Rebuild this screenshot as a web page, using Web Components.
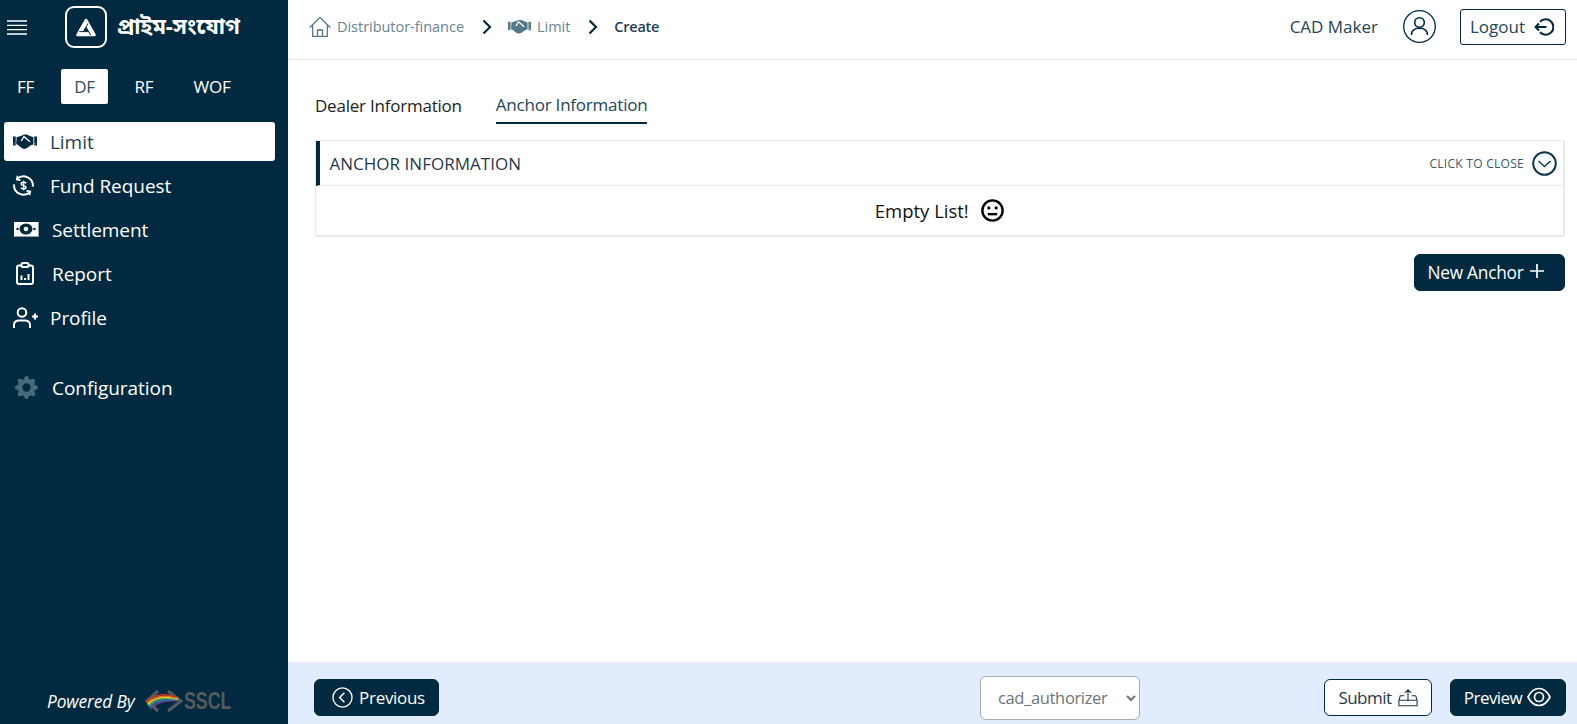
<!DOCTYPE html>
<html><head><meta charset="utf-8"><title>Limit</title>
<style>
html,body{margin:0;height:100%;overflow:hidden}
body{font-family:"Open Sans","Noto Sans",sans-serif;color:#012a40;background:#fff}
</style></head><body>
<app-shell></app-shell>
<script>
const handshake=(c,hs,w=24,h=15,slot='')=>`<svg ${slot} viewBox="0 0 24 15" width="${w}" height="${h}" style="display:block"><path fill="${c}" d="M0 2.500h2.700v9H0zM21.300 2.500H24v9h-2.700zM3.600 3.200 8.500 1.800 10.900.6h3l3 1.400 3.500 1.200v7.400l-2 .5-4.500 3-2 .8-2.500-.4-4.500-3.400-1.700-1z"/><path fill="none" stroke="${hs}" stroke-width="1.400" d="M8.300 7 11 2.500l5.900 5.300"/><path fill="${hs}" d="M1 9.500h.7v.8H1zM22.300 9.500h.7v.8h-.7z"/></svg>`;
const icons={
 fund:`<svg slot="icon" style="display:block" viewBox="0 0 22 22" width="21" height="21" fill="none" stroke="#fff" stroke-width="2"><path d="M4.400 4A9.800 9.800 0 0 1 20.800 12.200M17.600 18A9.800 9.800 0 0 1 1.200 9.800"/><path d="M4.800 .8 3.900 4.700l3.900.7M17.200 21.200l.9-3.900-3.900-.7" stroke-width="1.800"/><path d="M13.800 8.600c-.5-.7-1.500-1.100-2.700-1.100-1.600 0-2.600.7-2.600 1.800 0 2.500 5.200 1.100 5.200 3.500 0 1.100-1.100 1.800-2.600 1.800-1.200 0-2.300-.4-2.900-1.200M11.100 6v10" stroke-width="1.500"/></svg>`,
 cash:`<svg slot="icon" style="display:block" viewBox="0 0 25 15" width="25" height="15"><rect width="25" height="15" fill="#8fa0ab"/><rect width="24" height="14" fill="#fff"/><ellipse cx="12" cy="7" rx="6.500" ry="5.500" fill="#012a40"/><circle cx="12" cy="7" r="2.300" fill="#fff"/><circle cx="3.500" cy="7" r="1.200" fill="#012a40"/><circle cx="20.500" cy="7" r="1.200" fill="#012a40"/></svg>`,
 report:`<svg slot="icon" style="display:block" viewBox="0 0 18 23" width="18" height="23" fill="none" stroke="#fff" stroke-width="2"><rect x="1" y="3.500" width="16" height="18.500" rx="2"/><rect x="5.500" y="1" width="7" height="4" rx="1.500" fill="#012a40"/><path d="M5.500 18v-4.500M9 18v-2M12.500 18v-6"/></svg>`,
 profile:`<svg slot="icon" style="display:block" viewBox="0 0 25 21" width="25" height="21" fill="none" stroke="#fff" stroke-width="2"><circle cx="9" cy="5.500" r="4.300"/><path d="M1 21v-3c0-3 2.400-4.500 5-4.500h6c2.600 0 5 1.500 5 4.500v3"/><path d="M19 9.500h6M22 6.500v6" stroke-width="2.200"/></svg>`,
 gear:`<svg slot="icon" style="display:block" viewBox="0 0 16 16" width="23" height="23"><path fill="#47697c" d="M9.405 1.050c-.413-1.400-2.397-1.400-2.810 0l-.1.340a1.464 1.464 0 0 1-2.105.872l-.31-.17c-1.283-.698-2.686.705-1.987 1.987l.169.311c.446.820.023 1.841-.872 2.105l-.34.100c-1.400.413-1.400 2.397 0 2.810l.34.100a1.464 1.464 0 0 1 .872 2.105l-.17.310c-.698 1.283.705 2.686 1.987 1.987l.311-.169a1.464 1.464 0 0 1 2.105.872l.1.340c.413 1.400 2.397 1.400 2.810 0l.1-.340a1.464 1.464 0 0 1 2.105-.872l.31.170c1.283.698 2.686-.705 1.987-1.987l-.169-.311a1.464 1.464 0 0 1 .872-2.105l.34-.100c1.400-.413 1.400-2.397 0-2.810l-.34-.100a1.464 1.464 0 0 1-.872-2.105l.17-.310c.698-1.283-.705-2.686-1.987-1.987l-.311.169a1.464 1.464 0 0 1-2.105-.872l-.1-.340zM8 10.930a2.929 2.929 0 1 1 0-5.860 2.929 2.929 0 0 1 0 5.858z"/></svg>`
};
function el(name,html){customElements.define(name,class extends HTMLElement{constructor(){super();this.attachShadow({mode:'open'}).innerHTML=html}})}

el('nav-item',`<style>:host{display:flex;align-items:center;height:39px;margin:0 13px 5px 4px;color:#fff;font-size:19px;letter-spacing:-.05px;border-radius:3px}
:host([active]){background:#fff;color:#1e3f52}
.i{display:flex;align-items:center;width:var(--iw,46px);padding-left:var(--ip,9px);box-sizing:border-box}
</style><span class="i"><slot name="icon"></slot></span><slot></slot>`);

el('program-tabs',`<style>:host{display:flex;align-items:center;height:35px;margin:9px 0 18px 0;color:#fff;font-size:17px;letter-spacing:-.2px}
span{display:flex;align-items:center;justify-content:center;height:35px;border-radius:2px}
.a{background:#fff;color:#33515f}</style>
<span style="width:17px;margin-left:17px">FF</span><span class="a" style="width:47px;margin-left:27px">DF</span><span style="width:20px;margin-left:26px">RF</span><span style="width:40px;margin-left:38px">WOF</span>`);

el('side-nav',`<style>:host{display:flex;flex-direction:column;width:288px;flex:none;background:#012a40;color:#fff;height:100%;box-sizing:border-box}
.brand{display:flex;align-items:center;height:60px;box-sizing:border-box;padding-bottom:6px;box-shadow:0 1px 0 rgba(0,0,0,.12)}
.ham{width:20px;height:15px;margin-left:7px;display:block}
.logo{width:42px;height:42px;box-sizing:border-box;border:2px solid #fff;border-radius:9px;margin-left:38px;display:flex;align-items:center;justify-content:center}
.name{margin-left:10px;padding-top:3px;font:700 22px "Noto Sans Bengali","Noto Sans","Open Sans",sans-serif;white-space:nowrap;letter-spacing:-.2px}
.items{display:flex;flex-direction:column}
.foot{margin-top:auto;height:44px;display:flex;align-items:center;padding-left:47px;font-style:italic;font-size:17.300px;letter-spacing:-.1px;padding-bottom:2px;box-sizing:border-box}
.foot svg{margin-left:10px;display:block;flex:none}
.sscl{font:700 24px "Liberation Sans";font-style:normal;color:#555a5e;letter-spacing:0;margin-left:1px;transform:scaleX(.74);transform-origin:left center;display:inline-block;width:47px}
</style>
<div class="brand">
<svg class="ham" viewBox="0 0 20 15" stroke="#fff" stroke-width="1.300"><path d="M0 1h20M0 5.300h20M0 9.700h20M0 14h20"/></svg>
<div class="logo"><svg viewBox="0 0 20 19" width="20" height="19"><path fill="#fff" stroke="#fff" stroke-width="2.600" stroke-linejoin="round" d="M10 2 18.500 17H1.500z"/><path fill="#012a40" d="M10 9 12.600 13.600H7.400z"/><path fill="none" stroke="#012a40" stroke-width="1" d="M7.400 13.600 12 5.400M10 9l4.900 8.400M12.600 13.600H3.200"/></svg></div>
<div class="name">প্রাইম-সংযোগ</div></div>
<program-tabs></program-tabs>
<div class="items"><slot></slot></div>
<div class="foot"><span>Powered By</span>
<svg viewBox="0 0 38 24" width="38" height="24" fill="none"><path stroke="#555a5e" stroke-width="3.200" d="M13 2 2 12l11 10M23 2l13 10-13 10"/><path stroke="#7a3f8f" stroke-width="1.400" d="M5 20C11 13 20 11 33 11.500"/><path stroke="#2a6fb8" stroke-width="1.400" d="M4 18.500C10 12 20 9.500 33 11"/><path stroke="#3aa655" stroke-width="1.400" d="M3.300 17C10 10 20 8 33 10.500"/><path stroke="#f6d52b" stroke-width="1.400" d="M2.600 15.500C9 9 20 6.500 33 10"/><path stroke="#f2801b" stroke-width="1.400" d="M2 14C9 7.500 19 5 32 9.500"/><path stroke="#d0312d" stroke-width="1.400" d="M1.500 12.500C8 6 19 3.500 30 8"/></svg>
<span class="sscl">SSCL</span></div>`);

const chev=`<svg class="c" viewBox="0 0 10 16" width="10" height="16" fill="none" stroke="#012a40" stroke-width="2.200"><path d="M1.500 1.500 8 8l-6.500 6.500"/></svg>`;
el('bread-crumb',`<style>:host{display:flex;align-items:center;margin-left:21px;font-size:14.500px;color:#6a8494;letter-spacing:-.03px;white-space:nowrap}
.c{margin:0 16px 0 18px;display:block}
.b{color:#1e3f52;font-weight:600;font-size:14.500px;letter-spacing:-.25px}
svg{display:block}</style>
<svg viewBox="0 0 22 22" width="22" height="22" fill="none" stroke="#55778a" stroke-width="1.300" style="margin-right:6px"><path d="M.8 11.500 11 1.300l10.200 10.200M3.700 9v11.300h14.600V9M8.500 20.300v-6.300h5v6.300"/></svg>
<span>Distributor-finance</span>${chev}
<span style="margin-right:6px">${handshake('#55778a','#fff',23,15)}</span><span>Limit</span>${chev}
<span class="b">Create</span>`);

el('top-bar',`<style>:host{display:flex;align-items:center;height:60px;flex:none;box-sizing:border-box;padding-bottom:6px;border-bottom:1px solid #ececec;box-shadow:inset 8px 0 8px -8px rgba(0,0,0,.05)}
.r{margin-left:auto;display:flex;align-items:center;font-size:17px;color:#23465a;padding-right:11px}
.u{margin:0 24px 0 25px;display:block}
.l{display:flex;align-items:center;height:36px;width:106px;box-sizing:border-box;border:1px solid #012a40;border-radius:3px;padding-left:9px;gap:9px}</style>
<bread-crumb></bread-crumb>
<div class="r"><span>CAD Maker</span>
<svg class="u" viewBox="0 0 33 33" width="33" height="33" fill="none" stroke="#012a40" stroke-width="1.300"><circle cx="16.500" cy="16.500" r="15.800"/><circle cx="16.500" cy="12.500" r="4.800" stroke-width="1.600"/><path d="M8.500 25c0-5 3.500-6.700 8-6.700s8 1.700 8 6.700" stroke-width="1.600"/></svg>
<div class="l"><span>Logout</span><svg viewBox="0 0 20 20" width="20" height="20" fill="none" stroke="#012a40" stroke-width="2"><path d="M6 4.800A7.700 7.700 0 1 1 6 15.200M1.500 10h11M5 6.500 1.500 10 5 13.500"/></svg></div></div>`);

el('tab-bar',`<style>:host{display:flex;gap:34px;height:64px;align-items:flex-end;margin-left:27px;font-size:17px;letter-spacing:-.22px;box-sizing:border-box}
span{display:block;height:30px;box-sizing:border-box;line-height:24px;white-space:nowrap}
.a{color:#23465a;border-bottom:2px solid #012a40;line-height:22px}
.d{color:#222}</style><span class="d">Dealer Information</span><span class="a">Anchor Information</span>`);

el('info-accordion',`<style>:host{display:block;margin:16px 12px 0 26.500px;border:1px solid #e8e8ee;border-bottom-width:2px;border-right-width:2px;border-radius:2px;height:97px;box-sizing:border-box}
.h{display:flex;align-items:center;height:45px;box-sizing:border-box;border-left:4px solid #012a40;border-bottom:1px solid #e8e8ee;padding:0 6px 0 10px;font-size:17px;letter-spacing:.02px;color:#1f3a4a}
.t{margin-left:auto;font-size:12px;color:#3c5868;letter-spacing:.28px;margin-right:8px}
.b{display:flex;align-items:center;justify-content:center;height:49px;font-size:18.500px;color:#111;gap:12px;box-sizing:border-box}
svg{display:block}</style>
<div class="h"><span>ANCHOR INFORMATION</span><span class="t">CLICK TO CLOSE</span><svg viewBox="0 0 25 25" width="25" height="25" fill="none" stroke="#0d3a52" stroke-width="2"><circle cx="12.500" cy="12.500" r="11.300"/><path d="M6.500 10l6 5.500 6-5.500" stroke-width="1.500"/></svg></div>
<div class="b"><span>Empty List!</span><svg viewBox="0 0 22 22" width="23" height="23" fill="none" stroke="#000" stroke-width="2.300"><circle cx="11" cy="11" r="9.700"/><circle cx="7.500" cy="8.500" r="1.500" fill="#000" stroke="none"/><circle cx="14.500" cy="8.500" r="1.500" fill="#000" stroke="none"/><path d="M6.500 14.500h9"/></svg></div>`);

el('action-btn',`<style>:host{display:inline-flex;align-items:center;justify-content:center;height:37px;box-sizing:border-box;border-radius:6px;background:#012a40;color:#fff;font-size:17px;letter-spacing:-.3px;gap:6px;border:1px solid #012a40;white-space:nowrap;flex:none}
:host([outline]){background:#fff;color:#1f3a4a}
slot[name]{display:flex}</style><slot name="lead"></slot><slot></slot><slot name="icon"></slot>`);

el('sel-box',`<style>:host{display:block}select{display:block;width:160px;height:44px;border:1px solid #a9adb0;border-radius:6px;background:#fff;color:#6c757d;font:16.500px "Open Sans",sans-serif;letter-spacing:-.35px;padding-left:13px}</style><select><option>cad_authorizer</option></select>`);

el('foot-bar',`<style>:host{display:flex;align-items:center;height:62px;flex:none;background:#e1edfc;padding:7px 11px 0 26px;border-top:1px solid #eef0f3;box-sizing:border-box}
.m{margin:1px 0 0 541px}
.g{display:flex;gap:18px;margin-left:auto}</style>
<action-btn style="width:125px;padding-left:10px"><svg slot="lead" viewBox="0 0 22 22" width="21" height="21" fill="none" stroke="#fff" stroke-width="1.400"><circle cx="11" cy="11" r="10"/><path d="M13 6l-5 5 5 5" stroke-width="1.600"/></svg>Previous</action-btn>
<div class="m"><sel-box></sel-box></div>
<div class="g"><slot></slot></div>`);

el('app-shell',`<style>:host{display:flex;width:1577px;height:724px;overflow:hidden}
main{flex:1;display:flex;flex-direction:column;min-width:0}
.body{flex:1}
.na{display:flex;justify-content:flex-end;margin:17px 12px 0 0}
</style>
<side-nav>
<nav-item active>${handshake('#012a40','#fff',24,15,'slot="icon"')}Limit</nav-item>
<nav-item>${icons.fund}Fund Request</nav-item>
<nav-item style="--iw:48px;--ip:10px">${icons.cash}Settlement</nav-item>
<nav-item style="--iw:48px;--ip:12px">${icons.report}Report</nav-item>
<nav-item>${icons.profile}Profile</nav-item>
<div style="height:26px"></div>
<nav-item style="--iw:48px;--ip:11px">${icons.gear}Configuration</nav-item>
</side-nav>
<main><top-bar></top-bar>
<div class="body"><tab-bar></tab-bar><info-accordion></info-accordion>
<div class="na"><action-btn style="width:151px;font-size:17.300px;letter-spacing:-.25px;padding:0 12px 1px 0">New Anchor<svg slot="icon" viewBox="0 0 16 16" width="16" height="16" stroke="#fff" stroke-width="1.700" style="margin-top:-3px"><path d="M8 1v14M1 8h14"/></svg></action-btn></div></div>
<foot-bar>
<action-btn outline style="width:108px;letter-spacing:-.5px;padding-right:6px">Submit<svg slot="icon" viewBox="0 0 22 20" width="20" height="19" fill="none" stroke="#1f3a4a" stroke-width="1.200"><path d="M7 8H2.500L1 13v6h20v-6l-1.500-5H15M1 13h20M11 14V2M7.500 5 11 1.500 14.500 5"/></svg></action-btn>
<action-btn style="width:116px;letter-spacing:-.55px;padding-right:6px;gap:5px">Preview<svg slot="icon" viewBox="0 0 24 20" width="24" height="20" fill="none" stroke="#fff" stroke-width="1.700"><path d="M1 10c2.500-5 6.500-8.500 11-8.500S20.500 5 23 10c-2.500 5-6.500 8.500-11 8.500S3.500 15 1 10z"/><circle cx="12" cy="10" r="4.500"/></svg></action-btn>
</foot-bar></main>`);
</script></body></html>
